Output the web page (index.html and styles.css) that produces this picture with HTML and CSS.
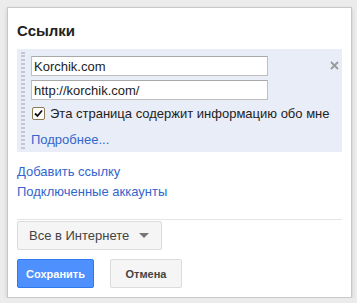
FILE: index.html
```html
<!DOCTYPE html>
<html lang="ru">

<head>
	<meta charset="UTF-8" />
	<title>Ссылки</title>
	<link rel="stylesheet" href="styles.css">
</head>

<body>
	<div class="dialog">
		<div class="title">Ссылки</div>

		<!-- одна ссылка -->
		<div class="link-item">
			<div class="handle"></div>
			<div class="link-fields">
				<input class="field" type="text" value="Korchik.com">
				<input class="field" type="text" value="http://korchik.com/">
				<label class="check-row">
					<span class="check">
						<svg width="9" height="9" viewBox="0 0 9 9">
							<path d="M1 4.5 L3.5 7 L8 1.5" fill="none" stroke="#111" stroke-width="1.8" />
						</svg>
					</span>
					Эта страница содержит информацию обо мне
				</label>
				<a class="link more" href="#">Подробнее...</a>
			</div>
			<span class="remove">
				<svg width="9" height="9" viewBox="0 0 9 9">
					<path d="M1 1 L8 8 M8 1 L1 8" stroke="#9a9a9a" stroke-width="1.8" />
				</svg>
			</span>
		</div>

		<div class="links">
			<a class="link" href="#">Добавить ссылку</a>
			<a class="link" href="#">Подключенные аккаунты</a>
		</div>

		<div class="footer">
			<button class="g-button select">
				Все в Интернете
				<span class="arrow"></span>
			</button>
			<div class="actions">
				<button class="g-button primary">Сохранить</button>
				<button class="g-button">Отмена</button>
			</div>
		</div>
	</div>
</body>

</html>
```

FILE: styles.css
```css
body {
	margin: 0;
	background: #ececec;
	font-family: "Liberation Sans", Arial, sans-serif;
	color: #222;
}

.dialog {
	margin: 7px 0 0 7px;
	width: 345px;
	height: 291px;
	box-sizing: border-box;
	background: #fff;
	border: 1px solid #c8c8c8;
	box-shadow: 0 2px 4px rgba(0, 0, 0, 0.15);
	padding: 0 9px;
}

.title {
	margin-top: 13px;
	margin-bottom: 8px;
	font-size: 15px;
	line-height: 20px;
	font-weight: bold;
}

/* link item */
.link-item {
	display: flex;
	align-items: flex-start;
	background: #e9edf8;
	height: 103px;
	box-sizing: border-box;
	padding-top: 7px;
}

.handle {
	margin: -4px 0 0 4px;
	width: 1px;
	height: 97px;
	border-left: 2px dotted #c4c7cf;
	border-right: 2px dotted #c4c7cf;
}

.link-fields {
	display: flex;
	flex-direction: column;
	margin-left: 6px;
}

.field {
	width: 237px;
	height: 20px;
	box-sizing: border-box;
	margin: 0 0 4px;
	padding: 0 2px;
	border: 1px solid #c0c0c0;
	border-top-color: #a8a8a8;
	font-family: inherit;
	font-size: 13px;
	color: #222;
	outline: none;
}

.check-row {
	display: flex;
	align-items: center;
	gap: 5px;
	height: 18px;
	white-space: nowrap;
	font-size: 13px;
}

.check {
	display: flex;
	align-items: center;
	justify-content: center;
	margin-left: 1px;
	width: 13px;
	height: 13px;
	box-sizing: border-box;
	border: 1px solid #8a7a4e;
	border-radius: 2px;
	background: #fff;
}

.link {
	display: block;
	color: #3366cc;
	text-decoration: none;
	font-size: 13px;
}

.more {
	margin-top: 10px;
	line-height: 16px;
}

.remove {
	margin: 5px 10px 0 auto;
	display: flex;
}

.links {
	margin-top: 10px;
}

.links .link {
	line-height: 20px;
}

/* footer */
.footer {
	margin-top: 17px;
	border-top: 1px solid #e5e5e5;
	padding-top: 1px;
}

.g-button {
	display: inline-flex;
	align-items: center;
	justify-content: center;
	height: 29px;
	box-sizing: border-box;
	border: 1px solid #dcdcdc;
	border-radius: 2px;
	background: #f5f5f5;
	color: #444;
	font-family: inherit;
	font-size: 11px;
	font-weight: bold;
	padding: 0;
	margin: 0;
	width: 72px;
}

.select {
	width: 145px;
	justify-content: flex-start;
	padding-left: 11px;
	font-size: 13px;
	font-weight: normal;
}

.arrow {
	margin-left: 10px;
	width: 0;
	height: 0;
	border-left: 5px solid transparent;
	border-right: 5px solid transparent;
	border-top: 5px solid #777;
}

.actions {
	display: flex;
	gap: 16px;
	margin-top: 9px;
}

.primary {
	width: 77px;
	background: #4d90fe;
	border-color: #3079ed;
	color: #fff;
}
```
